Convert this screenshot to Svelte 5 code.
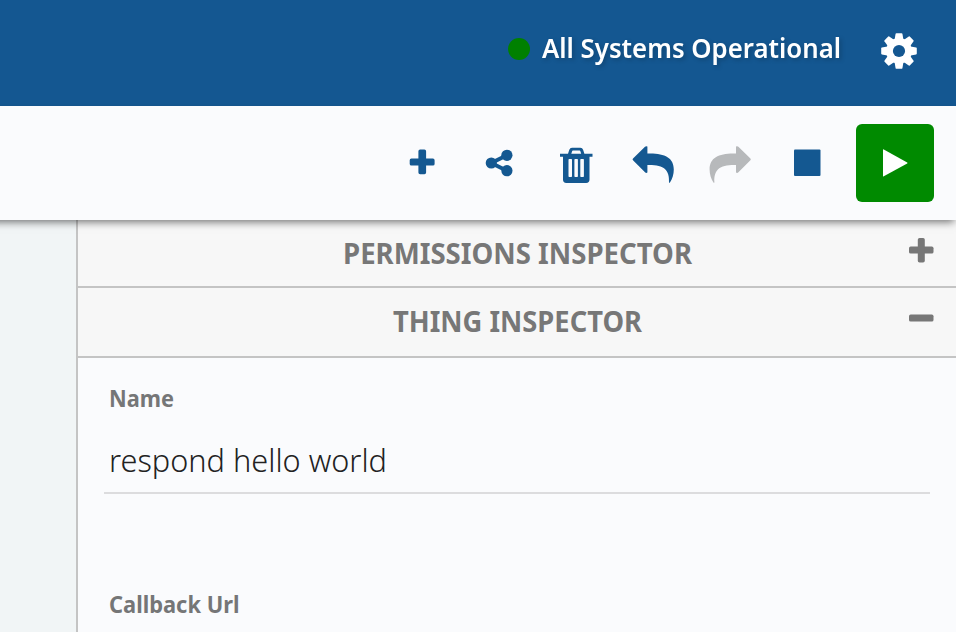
<script>
  const sections = [
    { title: 'PERMISSIONS INSPECTOR', open: false, width: 349 },
    { title: 'THING INSPECTOR', open: true, width: 249 }
  ];
  const teeth = [0, 45, 90, 135, 180, 225, 270, 315];
</script>

{#snippet label(text, width, height, baseline)}
  <svg class="label" {width} {height}>
    <text x="0" y={baseline} textLength={width} lengthAdjust="spacingAndGlyphs">{text}</text>
  </svg>
{/snippet}

<div class="app">
  <header>
    <span class="dot"></span>
    <div class="status">{@render label('All Systems Operational', 299, 40, 30.3)}</div>
    <svg class="gear" width="36" height="36" viewBox="-18 -18 36 36">
      <defs>
        <mask id="hub">
          <rect x="-18" y="-18" width="36" height="36" fill="#fff" />
          <circle r="6.1" fill="#000" />
        </mask>
      </defs>
      <g fill="#fff" mask="url(#hub)">
        <circle r="12.9" />
        {#each teeth as angle}
          <path transform="rotate({angle})" d="M-4.4-11.5-3.4-17.2Q-3.2-17.8-2.6-17.8H2.6Q3.2-17.8 3.4-17.2L4.4-11.5Z" />
        {/each}
      </g>
    </svg>
  </header>

  <nav>
    <svg class="tools" width="430" height="50" viewBox="400 140 430 50" fill="#145891">
      <path d="M420.1 149.5h4.3q1.7 0 1.7 1.7v7.3h6.8q1.7 0 1.7 1.7v3.7q0 1.7-1.7 1.7h-6.8v7q0 1.7-1.7 1.7h-4.3q-1.7 0-1.7-1.7v-7h-7q-1.7 0-1.7-1.7v-3.7q0-1.7 1.7-1.7h7v-7.3q0-1.7 1.7-1.7Z" />
      <path d="M506.9 155.3 491.3 163l15.6 7.7" fill="none" stroke="#145891" stroke-width="4" />
      <circle cx="491.3" cy="163" r="5.6" />
      <circle cx="506.9" cy="155.3" r="5.6" />
      <circle cx="506.9" cy="170.7" r="5.6" />
      <path fill-rule="evenodd" d="M560 153.7h8l1.3-4q.7-1.9 2.7-1.9h8.4q2 0 2.7 1.9l1.3 4h8.1v3h-3v22.8q0 3.4-3.4 3.4h-19.8q-3.3 0-3.3-3.4v-22.8h-3Zm11.3 0h9.9l-.9-2.6q-.2-.5-.7-.5h-6.7q-.5 0-.7.5Zm-2.1 5.4q-.7 0-.7.7v16.4q0 .8.7.8h2.1q.7 0 .7-.8v-16.4q0-.7-.7-.7Zm5.9 0q-.7 0-.7.7v16.4q0 .8.7.8h2.1q.7 0 .7-.8v-16.4q0-.7-.7-.7Zm5.9 0q-.7 0-.7.7v16.4q0 .8.7.8h2.2q.7 0 .7-.8v-16.4q0-.7-.7-.7Z" />
      <path d="M633 158.5 645 146.8q1.2-1.2 2.4-.2v7c16.4-.6 26.4 3.7 26.4 15.8 0 4.8-1.4 9.4-4 13.3q-.7.4-.8-.5c.7-12.5-5.2-17.6-21.6-17.2v7.5q-1.2 1-2.4-.2L633 160.3q-.9-.9 0-1.8Z" />
      <path fill="#b7b9bb" transform="translate(1383.4 0) scale(-1 1)" d="M633 158.5 645 146.8q1.2-1.2 2.4-.2v7c16.4-.6 26.4 3.7 26.4 15.8 0 4.8-1.4 9.4-4 13.3q-.7.4-.8-.5c.7-12.5-5.2-17.6-21.6-17.2v7.5q-1.2 1-2.4-.2L633 160.3q-.9-.9 0-1.8Z" />
      <rect x="794" y="149.6" width="26.5" height="26.5" rx="1" />
    </svg>
    <button aria-label="Run">
      <svg width="78" height="78"><path d="M27 25.8q0-.8.8-.4L51.2 38.5q.7.5 0 1L27.8 52.3q-.8.4-.8-.4Z" fill="#fff" /></svg>
    </button>
  </nav>

  <main>
    <aside></aside>
    <section class="panel">
      {#each sections as s}
        <div class="bar" class:open={s.open}>
          {@render label(s.title, s.width, 40, 30.4)}
          <svg class="toggle" width="25" height="25">
            <rect y="8.6" width="24.5" height="7" rx="1.7" />
            {#if !s.open}<rect x="8.8" width="7" height="24.5" rx="1.7" />{/if}
          </svg>
        </div>
      {/each}
      <div class="form">
        <div class="caption">{@render label('Name', 65, 30, 23.3)}</div>
        <div class="field">{@render label('respond hello world', 278, 40, 30.3)}</div>
        <div class="caption second">{@render label('Callback Url', 130.5, 30, 23.3)}</div>
      </div>
    </section>
  </main>
</div>

<style>
  :global(body) { margin: 0; overflow: hidden; }
  .app {
    width: 956px; height: 632px; overflow: hidden;
    display: flex; flex-direction: column;
    font-family: "Noto Sans", "Open Sans", sans-serif;
    background: #fafbfd;
  }
  svg { display: block; flex: none; }
  .label { overflow: visible; fill: currentColor; }
  header {
    height: 106px; flex: none; box-sizing: border-box;
    display: flex; align-items: flex-start;
    padding-left: 508px; background: #145791; color: #fff;
  }
  .dot { width: 22px; height: 22px; margin-top: 38px; border-radius: 50%; background: #008000; }
  .status {
    margin: 28px 0 0 12px; font-size: 26.5px; font-weight: 650;
    filter: drop-shadow(2px 2px 2px rgba(0, 0, 0, 0.2));
  }
  .gear { margin: 33px 0 0 39.5px; }
  nav {
    position: relative; z-index: 1;
    height: 114px; flex: none; box-sizing: border-box;
    display: flex; align-items: flex-start;
    margin-left: -20px; padding: 18px 22px 0 420px; background: #fafbfd;
    box-shadow: 0 4px 8px -2px rgba(0, 0, 0, 0.55);
  }
  .tools { margin: 16px 26px 0 0; }
  button { width: 78px; height: 78px; padding: 0; border: 0; border-radius: 6px; background: #008a00; }
  main { flex: 1; display: flex; min-height: 0; }
  aside { width: 76px; flex: none; background: #f1f5f6; }
  .panel { flex: 1; border-left: 2px solid #c4c4c4; }
  .bar {
    box-sizing: border-box; height: 68px;
    display: grid; grid-template-columns: 46px 1fr 46px; justify-items: center; align-items: start;
    padding-top: 14px; border-bottom: 2px solid #c4c4c4;
    background: #f7f7f7; color: #777; font-size: 28px; font-weight: 700;
  }
  .bar.open { height: 70px; }
  .bar .label { grid-column: 2; }
  .toggle { margin: 4px 0 0 -23px; fill: #777; }
  .form { padding: 26px 26px 0; }
  .caption { padding-left: 5px; color: #757677; font-size: 23px; font-weight: 700; }
  .field {
    height: 80px; box-sizing: border-box; padding: 28px 0 0 5px;
    border-bottom: 2px solid #dcdcde; color: #222; font-size: 31px; font-weight: 350;
  }
  .second { margin-top: 96px; }
</style>
